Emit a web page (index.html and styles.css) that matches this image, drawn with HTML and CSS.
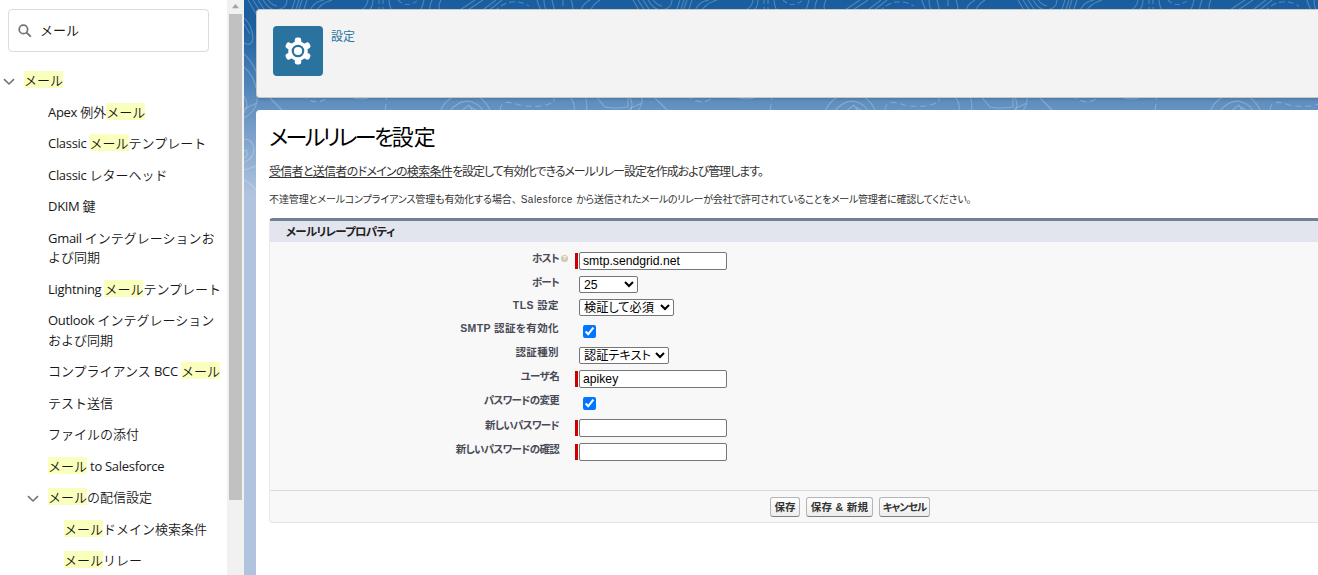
FILE: index.html
```
<!DOCTYPE html>
<html lang="ja">
<head>
    <meta charset="UTF-8">
    <meta name="viewport" content="width=device-width, initial-scale=1.0">
    <title>メールリレーを設定</title>
    <link rel="stylesheet" href="styles.css">
</head>
<body>

    <nav class="sidebar">
        <div class="search-box">
            <svg class="search-icon" width="14" height="14" viewBox="0 0 14 14" fill="none" stroke="#747474">
                <circle cx="5.4" cy="5.4" r="4.2" stroke-width="1.7"/>
                <path d="M8.6 8.6L12.8 12.6" stroke-width="2"/>
            </svg>
            <span>メール</span>
        </div>
        <ul class="tree">
            <li class="root">
                <svg class="chevron" width="12" height="8" viewBox="0 0 12 8"><path d="M1 1.2L6 6L11 1.2"/></svg>
                <mark>メール</mark>
            </li>
            <li><span class="en">Apex </span>例外<mark>メール</mark></li>
            <li><span class="en">Classic </span><mark>メール</mark>テンプレート</li>
            <li><span class="en">Classic </span>レターヘッド</li>
            <li><span class="en">DKIM </span>鍵</li>
            <li class="two-line"><span class="en">Gmail </span>インテグレーションお<br>よび同期</li>
            <li><span class="en">Lightning </span><mark>メール</mark>テンプレート</li>
            <li class="two-line"><span class="en">Outlook </span>インテグレーション<br>および同期</li>
            <li>コンプライアンス<span class="en"> BCC </span><mark>メール</mark></li>
            <li>テスト送信</li>
            <li>ファイルの添付</li>
            <li><mark>メール</mark><span class="en"> to Salesforce</span></li>
            <li class="branch">
                <svg class="chevron" width="12" height="8" viewBox="0 0 12 8"><path d="M1 1.2L6 6L11 1.2"/></svg>
                <mark>メール</mark>の配信設定
            </li>
            <li class="leaf"><mark>メール</mark>ドメイン検索条件</li>
            <li class="leaf"><mark>メール</mark>リレー</li>
        </ul>
    </nav>

    <div class="scrollbar">
        <svg width="17" height="14" viewBox="0 0 17 14"><path d="M5 8.2L8.5 4L12 8.2Z" fill="#a3a3a3"/></svg>
        <div class="thumb"></div>
    </div>

    <main class="main">
        <svg class="contours" width="1074" height="195" fill="none" stroke="#fff" stroke-opacity=".24" stroke-width="1.1">
            <defs>
                <pattern id="topo" width="385" height="195" patternUnits="userSpaceOnUse">
                    <!-- upper edge -->
                    <path d="M4 0L17 22M9 0L22 20M14 0L26 18M19 0Q25 10 32 10Q43 9 43 0M24 0Q29 6 33 6"/>
                    <path d="M51 0L47 12M55 0L51 12M58 0L54 12M63 0L59 12"/>
                    <path d="M66 12Q68 2 80 0M72 12Q75 4 88 0M122 12Q129 9 129 0M114 12Q123 8 124 0"/>
                    <path d="M135 0V4M135 7V12M139 0V4M139 7V12" />
                    <path d="M145 0Q146 10 150 13M180 0Q178 10 174 13M188 0Q185 6 186 12M197 0Q193 7 197 12"/>
                    <path d="M154 0Q163 9 174 0" stroke-dasharray="5 3"/>
                    <path d="M213 12L231 0M221 12L239 0M236 12L252 0M243 12L258 0"/>
                    <path d="M250 12Q266 -5 285 6" stroke-dasharray="6 3"/>
                    <path d="M293 0Q295 8 299 12M300 0Q300 8 304 12M308 0L311 12M319 0V6M320 9V12M327 0Q330 7 328 12M346 0Q337 5 337 12M356 0Q348 5 346 12"/>
                    <!-- band between the cards -->
                    <path d="M20 92L40 112M0 96Q6 105 0 113M100 94Q120 104 130 94M196 112Q202 96 220 94Q238 92 247 112M205 112Q216 98 228 102Q238 106 239 112M216 112L225 105L229 112M225 106L235 112"/>
                    <path d="M58 95Q72 108 86 96M143 94L141 112M256 110Q257 98 275 105Q294 109 310 102L310 96" stroke-dasharray="6 4"/>
                    <path d="M320 92Q332 99 330 112M338 92Q345 101 342 112M350 94L361 107Q370 109 384 107L384 96"/>
                    <!-- left gutter -->
                    <path d="M0 18Q8 25 9 38Q8 47 0 43M0 24L6 34M0 54Q12 66 13 76V102Q11 112 0 118M0 67Q10 76 12 88M0 109L13 103"/>
                    <path d="M0 139Q9 139 10 149Q9 160 0 162M0 151Q4 148 3 156L0 158M0 170L12 166M0 180Q6 183 12 190"/>
                </pattern>
            </defs>
            <rect width="1074" height="195" fill="url(#topo)" stroke="none"/>
        </svg>

        <header class="page-header">
            <div class="header-icon">
                <svg width="28" height="28" viewBox="-14 -14 28 28">
                    <g fill="#fff">
                        <circle r="9.8"/>
                        <g id="tooth"><rect x="-3.2" y="-13.6" width="6.4" height="7" rx="2.4"/><rect x="-3.2" y="6.6" width="6.4" height="7" rx="2.4"/></g>
                        <use href="#tooth" transform="rotate(60)"/>
                        <use href="#tooth" transform="rotate(120)"/>
                    </g>
                    <circle r="5.2" fill="#fff" stroke="#2a739e" stroke-width="2.2"/>
                </svg>
            </div>
            <span class="header-title">設定</span>
        </header>

        <section class="content">
            <h1><span class="kana">メールリレーを</span>設定</h1>
            <p class="lead"><u>受信者と送信者のドメインの検索条件</u>を設定して有効化できるメールリレー設定を作成および管理します。</p>
            <p class="note"><span class="first">不達管理とメールコンプライアンス管理も有効化する場合、</span><span class="latin">Salesforce </span>から送信されたメールのリレーが会社で許可されていることをメール管理者に確認してください。</p>

            <form class="block">
                <h2>メールリレープロパティ</h2>
                <div class="fields">
                    <label>ホスト<span class="help">?</span></label>
                    <div class="control required"><input type="text" value="smtp.sendgrid.net"></div>

                    <label>ポート</label>
                    <div class="control"><select class="port"><option>25</option></select></div>

                    <label class="wide">TLS 設定</label>
                    <div class="control"><select class="tls"><option>検証して必須</option></select></div>

                    <label class="wide">SMTP 認証を有効化</label>
                    <div class="control"><input type="checkbox" checked></div>

                    <label class="wide">認証種別</label>
                    <div class="control"><select class="auth"><option>認証テキスト</option></select></div>

                    <label>ユーザ名</label>
                    <div class="control required"><input type="text" value="apikey"></div>

                    <label>パスワードの変更</label>
                    <div class="control"><input type="checkbox" checked></div>

                    <label>新しいパスワード</label>
                    <div class="control required"><input type="password"></div>

                    <label>新しいパスワードの確認</label>
                    <div class="control required"><input type="password"></div>
                </div>
                <div class="buttons">
                    <button type="button" class="save">保存</button>
                    <button type="button" class="save-new">保存 &amp; 新規</button>
                    <button type="button" class="cancel">キャンセル</button>
                </div>
            </form>
        </section>
    </main>

</body>
</html>
```
FILE: styles.css
```
* {
    box-sizing: border-box;
}

body {
    margin: 0;
    display: flex;
    width: 1318px;
    height: 575px;
    overflow: hidden;
    background-color: #fff;
    color: #181818;
    font-family: "Open Sans", "Noto Sans CJK JP", sans-serif;
    font-size: 13px;
    font-weight: 400;
}

/* sidebar */
.sidebar {
    width: 227px;
    flex: none;
    padding-top: 9px;
}

.search-box {
    display: flex;
    align-items: center;
    gap: 8px;
    width: 201px;
    height: 43px;
    margin-left: 8px;
    padding: 0 0 2px 9px;
    border: 1px solid #dddbda;
    border-radius: 4px;
}

.search-icon {
    margin-top: 2px;
}

.tree {
    list-style: none;
    margin: 12px 0 0;
    padding: 0;
}

.tree li {
    height: 31.5px;
    padding: 6px 0 6px 48px;
    line-height: 19.5px;
    white-space: nowrap;
    font-family: "Noto Sans CJK JP", sans-serif;
    font-weight: 350;
}

.tree .two-line {
    height: 51px;
}

.tree .root {
    padding-left: 3px;
    display: flex;
    align-items: center;
    gap: 9px;
}

.tree .branch {
    display: flex;
    align-items: center;
    padding-left: 27px;
}

.branch .chevron {
    margin-right: 9px;
}

.tree .leaf {
    padding-left: 64px;
}

/* keeps the latin runs from stretching the line box */
.en {
    font-family: "Open Sans", sans-serif;
    font-weight: 400;
    letter-spacing: -0.3px;
    line-height: 1;
    white-space: pre;
}

mark {
    display: inline-block;
    line-height: 17px;
    height: 17px;
    background-color: #faffbd;
    color: inherit;
}

.chevron {
    fill: none;
    stroke: #747474;
    stroke-width: 1.6;
    margin-top: 4px;
}

.scrollbar {
    width: 17px;
    flex: none;
    background-color: #f1f1f1;
}

.scrollbar svg {
    display: block;
}

.thumb {
    width: 13px;
    height: 486px;
    margin-left: 2px;
    background-color: #c1c1c1;
}

/* main area */
.main {
    position: relative;
    flex: 1;
    min-width: 0;
    padding: 9px 0 0 12px;
    background: linear-gradient(#195e9f 0, #1d60a0 28px, #5b8cbe 98px, #b0c4df 195px) #b0c4df;
    display: flex;
    flex-direction: column;
}

.contours {
    position: absolute;
    top: 0;
    left: 0;
}

.page-header {
    position: relative;
    display: flex;
    height: 89px;
    flex: none;
    padding: 16px;
    background-color: #f3f3f3;
    border: 1px solid #c9c9c9;
    border-right: none;
    border-radius: 4px 0 0 4px;
    box-shadow: 0 2px 2px rgba(0, 0, 0, 0.1);
}

.header-icon {
    width: 50px;
    height: 50px;
    border-radius: 4px;
    background-color: #2a739e;
    display: flex;
    align-items: center;
    justify-content: center;
}

.header-title {
    margin-left: 8px;
    color: #2a739e;
    font-size: 12px;
    line-height: 22px;
}

.content {
    position: relative;
    flex: 1;
    margin-top: 12px;
    padding-left: 13px;
    background-color: #fff;
    border-radius: 4px 0 0 0;
    color: #333;
    font-family: "Liberation Sans", "Noto Sans CJK JP", sans-serif;
    font-feature-settings: "palt";
    white-space: nowrap;
}

h1 {
    margin: 0;
    padding-top: 13px;
    height: 51px;
    font-size: 22px;
    line-height: 30px;
    font-weight: 400;
    color: #000;
}

.kana {
    letter-spacing: -2.6px;
}

.lead {
    margin: 0;
    height: 28px;
    font-size: 12px;
    line-height: 22px;
    letter-spacing: -1.05px;
}

.lead u {
    letter-spacing: -0.7px;
}

.note {
    margin: 0;
    height: 29px;
    font-size: 10px;
    line-height: 22px;
    letter-spacing: -0.3px;
}

.note .first {
    margin-right: 4px;
    letter-spacing: -0.1px;
}

.note .latin {
    letter-spacing: 0.5px;
}

.block {
    height: 305px;
    border-top: 3px solid #747e96;
    border-left: 1px solid #eaeaea;
    border-bottom: 1px solid #e3e3e3;
    border-radius: 4px 0 0 4px;
    background-color: #f8f8f8;
}

h2 {
    margin: 0;
    padding-left: 16px;
    height: 21px;
    font-size: 11.5px;
    line-height: 22px;
    letter-spacing: -0.75px;
    color: #222;
    background-color: #e3e5ee;
}

.fields {
    display: grid;
    grid-template-columns: 289px 1fr;
    grid-template-rows: 24px 23px 23px 24px 24px 24px 25px 24px 24px;
    column-gap: 16px;
    height: 248px;
    padding-top: 7px;
}

label {
    position: relative;
    text-align: right;
    font-size: 10.5px;
    font-weight: bold;
    line-height: 18px;
    letter-spacing: -0.7px;
    color: #4a4a56;
}

label.wide {
    letter-spacing: 0.4px;
}

/* sits in the gap between label and field */
.help {
    position: absolute;
    left: 291px;
    top: 6px;
    width: 7px;
    height: 7px;
    border-radius: 50%;
    background-color: #d4c8ac;
    color: #fff;
    font-size: 6px;
    line-height: 7px;
    letter-spacing: 0;
    text-align: center;
}

.control {
    display: flex;
    align-items: center;
    padding-left: 4px;
}

.control.required {
    padding-left: 0;
}

.required::before {
    content: "";
    width: 3px;
    height: 16px;
    margin-right: 1px;
    background-color: #c00;
}

input, select {
    margin: 0;
    font-family: "Liberation Sans", "Noto Sans CJK JP", sans-serif;
    font-feature-settings: "palt";
    font-size: 12.2px;
    color: #000;
}

input[type="text"], input[type="password"] {
    width: 148px;
    height: 18px;
    padding: 1px 3px;
    border: 1px solid #767676;
    border-radius: 2px;
    background-color: #fff;
}

input[type="checkbox"] {
    width: 13px;
    height: 13px;
    margin-left: 4px;
}

select {
    height: 17px;
    padding: 0;
    border: 1px solid #767676;
    border-radius: 2px;
    background-color: #fff;
}

.port {
    width: 59px;
}

.tls {
    width: 95px;
}

.auth {
    width: 90px;
}

.buttons {
    display: flex;
    gap: 6px;
    height: 32px;
    padding: 6px 0 0 500px;
    border-top: 1px solid #dbdbdb;
}

button {
    height: 20px;
    padding: 0;
    border: 1px solid #b5b5b5;
    border-bottom-color: #7f7f7f;
    border-radius: 3px;
    background: linear-gradient(#fff, #ededed);
    color: #333;
    font-family: "Liberation Sans", "Noto Sans CJK JP", sans-serif;
    font-feature-settings: "palt";
    font-size: 10.5px;
    font-weight: bold;
    line-height: 18px;
}

.save {
    width: 30px;
}

.save-new {
    width: 67px;
    letter-spacing: 0.3px;
}

.cancel {
    width: 51px;
    letter-spacing: -1px;
}
```
